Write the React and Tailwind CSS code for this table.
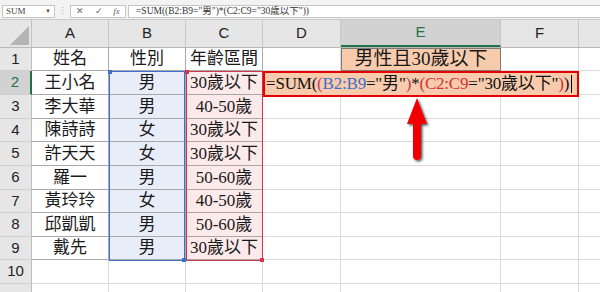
import React from "react";

const COLS = [
  { key: "A", w: 77, label: "A" },
  { key: "B", w: 77, label: "B" },
  { key: "C", w: 77, label: "C" },
  { key: "D", w: 78, label: "D" },
  { key: "E", w: 160, label: "E" },
  { key: "F", w: 78, label: "F" },
  { key: "G", w: 30, label: "" },
];

const ROW_H = [23, 24, 24, 23, 24, 24, 23, 24, 23, 24, 10];

const DATA = [
  ["姓名", "性別", "年齡區間"],
  ["王小名", "男", "30歲以下"],
  ["李大華", "男", "40-50歲"],
  ["陳詩詩", "女", "30歲以下"],
  ["許天天", "女", "30歲以下"],
  ["羅一", "男", "50-60歲"],
  ["黃玲玲", "女", "40-50歲"],
  ["邱凱凱", "男", "50-60歲"],
  ["戴先", "男", "30歲以下"],
];

const cellFont = { fontFamily: '"Liberation Serif", "Noto Sans CJK TC", serif' };
const uiFont = { fontFamily: '"Liberation Sans", "Noto Sans", sans-serif' };

function FormulaBar() {
  return (
    <div className="flex items-start h-[20px] bg-[#f3f3f3] border-b border-[#c8c8c8] pt-[5px]" style={uiFont}>
      <div className="ml-[2px] w-[53px] h-[13px] bg-white border border-[#c6c6c6] flex items-center justify-between px-[3px]">
        <span className="text-[9px] text-[#444]" style={cellFont}>SUM</span>
        <span className="text-[6px] text-[#555]">▼</span>
      </div>
      <div className="w-[15px] h-[13px] flex items-center justify-center text-[9px] text-[#aaa]">⋮</div>
      <div className="w-[56px] h-[13px] bg-white border border-[#c6c6c6] flex items-center justify-around text-[#666] text-[9px]">
        <span>✕</span>
        <span>✓</span>
        <span className="italic" style={cellFont}>fx</span>
      </div>
      <div className="ml-[2px] flex-1 h-[13px] bg-white border border-[#c6c6c6] border-r-0 flex items-center pl-[7px] text-[9.5px] text-[#333]" style={cellFont}>
        =SUM((B2:B9="男")*(C2:C9="30歲以下"))
      </div>
    </div>
  );
}

function HeaderRow() {
  return (
    <div className="flex h-[28px] bg-[#e6e6e6] border-b border-[#b9b9b9]" style={uiFont}>
      <div className="w-[32px] shrink-0 border-r border-[#c3c3c3] flex items-end justify-end p-[2px]">
        <div className="w-0 h-0 border-l-[19px] border-l-transparent border-b-[19px] border-b-[#b5b5b5]" />
      </div>
      {COLS.map((c) => (
        <div
          key={c.key}
          className={`shrink-0 border-r border-[#c8c8c8] flex items-center justify-center text-[15px] ${
            c.key === "E" ? "bg-[#d2d2d2] text-[#217346] border-b-2 border-b-[#217346]" : "text-[#222]"
          }`}
          style={{ width: c.w }}
        >
          {c.label}
        </div>
      ))}
    </div>
  );
}

function Row({ index }) {
  const r = index + 1;
  const vals = DATA[index] || [];
  const selected = r === 2;
  const inTable = r <= 9;
  return (
    <div className="flex" style={{ height: ROW_H[index] }}>
      <div
        className={`w-[32px] shrink-0 flex items-center justify-center text-[15px] border-b border-[#cfcfcf] ${
          selected
            ? "bg-[#d2d2d2] text-[#217346] border-r-2 border-r-[#217346]"
            : "bg-[#e6e6e6] text-[#222] border-r border-r-[#bdbdbd]"
        }`}
        style={uiFont}
      >
        {r <= 10 ? r : ""}
      </div>
      {COLS.map((c, ci) => {
        let cls = "border-r border-b border-[#dadada]";
        if (inTable && ci < 3) cls = "border-r border-b border-[#a8a8a8]";
        if (r >= 2 && r <= 9 && ci === 1) cls += " bg-[#e8eef9]";
        if (r >= 2 && r <= 9 && ci === 2) cls += " bg-[#fce9e9]";
        if (r === 1 && ci === 4) cls = "border border-[#7b7b7b] bg-[#f8cbad] text-[19px]";
        const text = ci < 3 ? vals[ci] : r === 1 && ci === 4 ? "男性且30歲以下" : "";
        return (
          <div
            key={c.key}
            className={`shrink-0 flex items-center justify-center text-[17px] text-[#1a1a1a] overflow-hidden whitespace-nowrap ${cls}`}
            style={{ width: c.w, ...cellFont }}
          >
            {text}
          </div>
        );
      })}
    </div>
  );
}

function Arrow() {
  return (
    <svg width="34" height="70" viewBox="0 0 34 70" className="absolute left-[401px] top-[96px]">
      <defs>
        <filter id="sh" x="-30%" y="-30%" width="160%" height="160%">
          <feDropShadow dx="1.5" dy="1.5" stdDeviation="1" floodColor="#1d3b44" floodOpacity="0.8" />
        </filter>
      </defs>
      <path
        d="M16 2 L26 28 L20 28 L20 60 Q20 64 16 64 Q12 64 12 60 L12 28 L6 28 Z"
        fill="#f20000"
        filter="url(#sh)"
      />
    </svg>
  );
}

export default function App() {
  return (
    <div className="w-[600px] h-[292px] overflow-hidden bg-white relative">
      <FormulaBar />
      <HeaderRow />
      {ROW_H.map((_, i) => (
        <Row key={i} index={i} />
      ))}

      {/* range highlights */}
      <div className="absolute left-[109px] top-[71px] w-[76px] h-[190px] border border-[#3f6fcf] pointer-events-none">
        <div className="absolute -left-[2px] -top-[2px] w-[4px] h-[4px] bg-[#3f6fcf]" />
        <div className="absolute -right-[2px] -bottom-[2px] w-[4px] h-[4px] bg-[#3f6fcf]" />
      </div>
      <div className="absolute left-[186px] top-[71px] w-[77px] h-[190px] border border-[#d0374a] pointer-events-none">
        <div className="absolute -left-[2px] -top-[2px] w-[4px] h-[4px] bg-[#d0374a]" />
        <div className="absolute -right-[2px] -bottom-[2px] w-[4px] h-[4px] bg-[#d0374a]" />
      </div>

      {/* cell editor */}
      <div
        className="absolute left-[263px] top-[71px] w-[316px] h-[26px] bg-[#f8cbad] border-2 border-[#e60000] flex items-center pl-[1px] text-[17px] tracking-[-0.2px] whitespace-nowrap text-[#111]"
        style={cellFont}
      >
        <span>=SUM(</span>
        <span className="text-[#c23b6b]">(</span>
        <span className="text-[#3b6fc9]">B2:B9</span>
        <span>="男"</span>
        <span className="text-[#c23b6b]">)</span>
        <span>*</span>
        <span className="text-[#d0303a]">(</span>
        <span className="text-[#d0303a]">C2:C9</span>
        <span>="30歲以下"</span>
        <span className="text-[#d0303a]">)</span>
        <span>)</span>
        <span className="ml-[2px] w-px h-[18px] bg-black" />
      </div>

      <Arrow />
    </div>
  );
}
